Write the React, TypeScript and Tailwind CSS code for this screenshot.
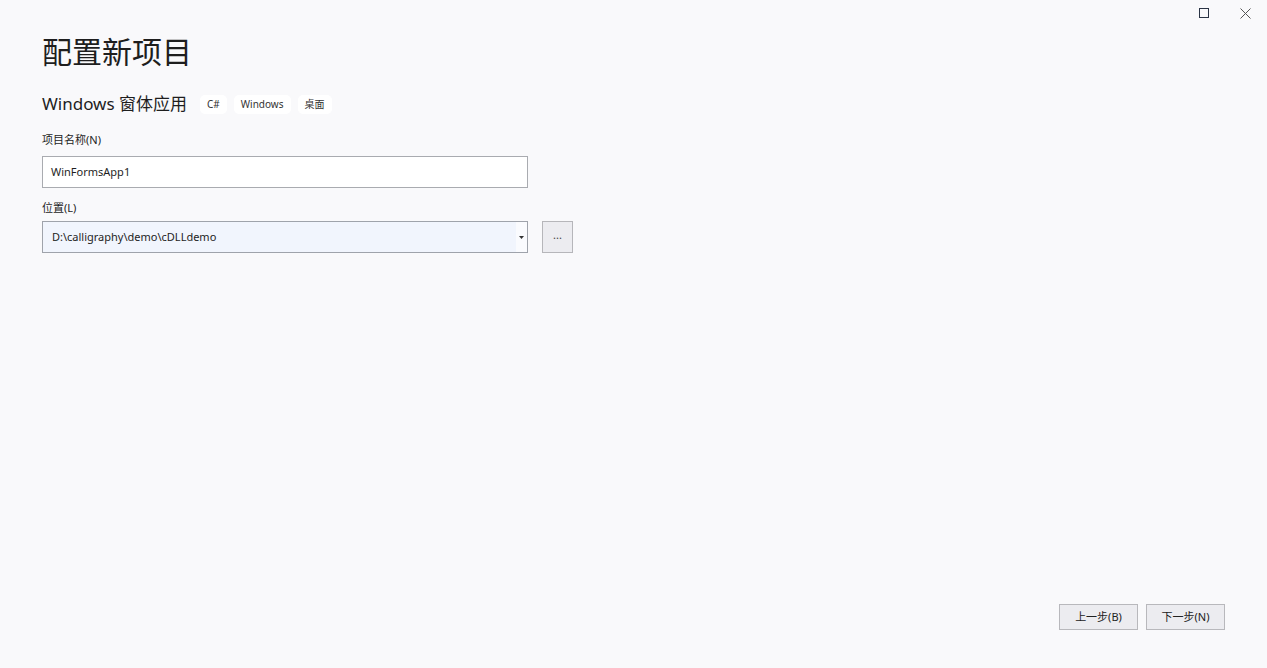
import React from "react";

const FONT = "font-['Noto_Sans','Noto_Sans_CJK_SC',sans-serif]";

function Tag({ label }: { label: string }) {
  return (
    <span className="flex h-[19px] items-center rounded-[5px] bg-white px-[7px] text-[10px] text-[#333]">
      {label}
    </span>
  );
}

export default function App() {
  return (
    <div className={`flex h-[668px] w-full flex-col bg-[#f9f9fb] text-[#1e1e1e] ${FONT}`}>
      {/* window controls */}
      <div className="flex h-[28px] items-center justify-end gap-[31px] pr-[16px]">
        <svg width="10" height="10" viewBox="0 0 10 10" className="mt-[-2px]">
          <rect x="0.5" y="0.5" width="9" height="9" fill="none" stroke="#2b3445" strokeWidth="1" />
        </svg>
        <svg width="11" height="11" viewBox="0 0 11 11" className="mt-[-2px]">
          <path d="M0.5 0.5 L10.5 10.5 M10.5 0.5 L0.5 10.5" stroke="#555" strokeWidth="1" />
        </svg>
      </div>

      <div className="flex flex-col pl-[42px]">
        <h1 className="mt-[4px] text-[30px] leading-[40px] font-normal">配置新项目</h1>

        <div className="mt-[20px] flex items-center gap-[7px]">
          <span className="mr-[6px] text-[17px] leading-[24px]">Windows 窗体应用</span>
          <Tag label="C#" />
          <Tag label="Windows" />
          <Tag label="桌面" />
        </div>

        <label className="mt-[16px] text-[11px] leading-[16px] text-[#1e1e1e]">项目名称(N)</label>
        <div className="mt-[8px] flex h-[32px] w-[486px] items-center border border-[#a9abb0] bg-white pl-[8px] text-[11px]">
          WinFormsApp1
        </div>

        <label className="mt-[12px] text-[11px] leading-[16px]">位置(L)</label>
        <div className="mt-[5px] flex items-center gap-[14px]">
          <div className="flex h-[32px] w-[486px] items-stretch border border-[#9fa3ab] bg-[#f1f5fd]">
            <div className="flex flex-1 items-center pl-[9px] text-[11px]">D:\calligraphy\demo\cDLLdemo</div>
            <div className="flex w-[11px] items-center justify-center bg-[#fafbfe]">
              <svg width="5" height="3" viewBox="0 0 5 3">
                <path d="M0 0 L5 0 L2.5 3 Z" fill="#333" />
              </svg>
            </div>
          </div>
          <button className="flex h-[32px] w-[31px] items-center justify-center border border-[#b6b6ba] bg-[#ececf0] pb-[4px] text-[11px] text-[#444]">
            ...
          </button>
        </div>
      </div>

      <div className="flex-1" />

      <div className="flex justify-end gap-[8px] pr-[42px] pb-[38px]">
        <button className="flex h-[26px] w-[79px] items-center justify-center border border-[#b8b8bc] bg-[#ececf0] text-[11px] text-[#222]">
          上一步(B)
        </button>
        <button className="flex h-[26px] w-[79px] items-center justify-center border border-[#b8b8bc] bg-[#ececf0] text-[11px] text-[#222]">
          下一步(N)
        </button>
      </div>
    </div>
  );
}
